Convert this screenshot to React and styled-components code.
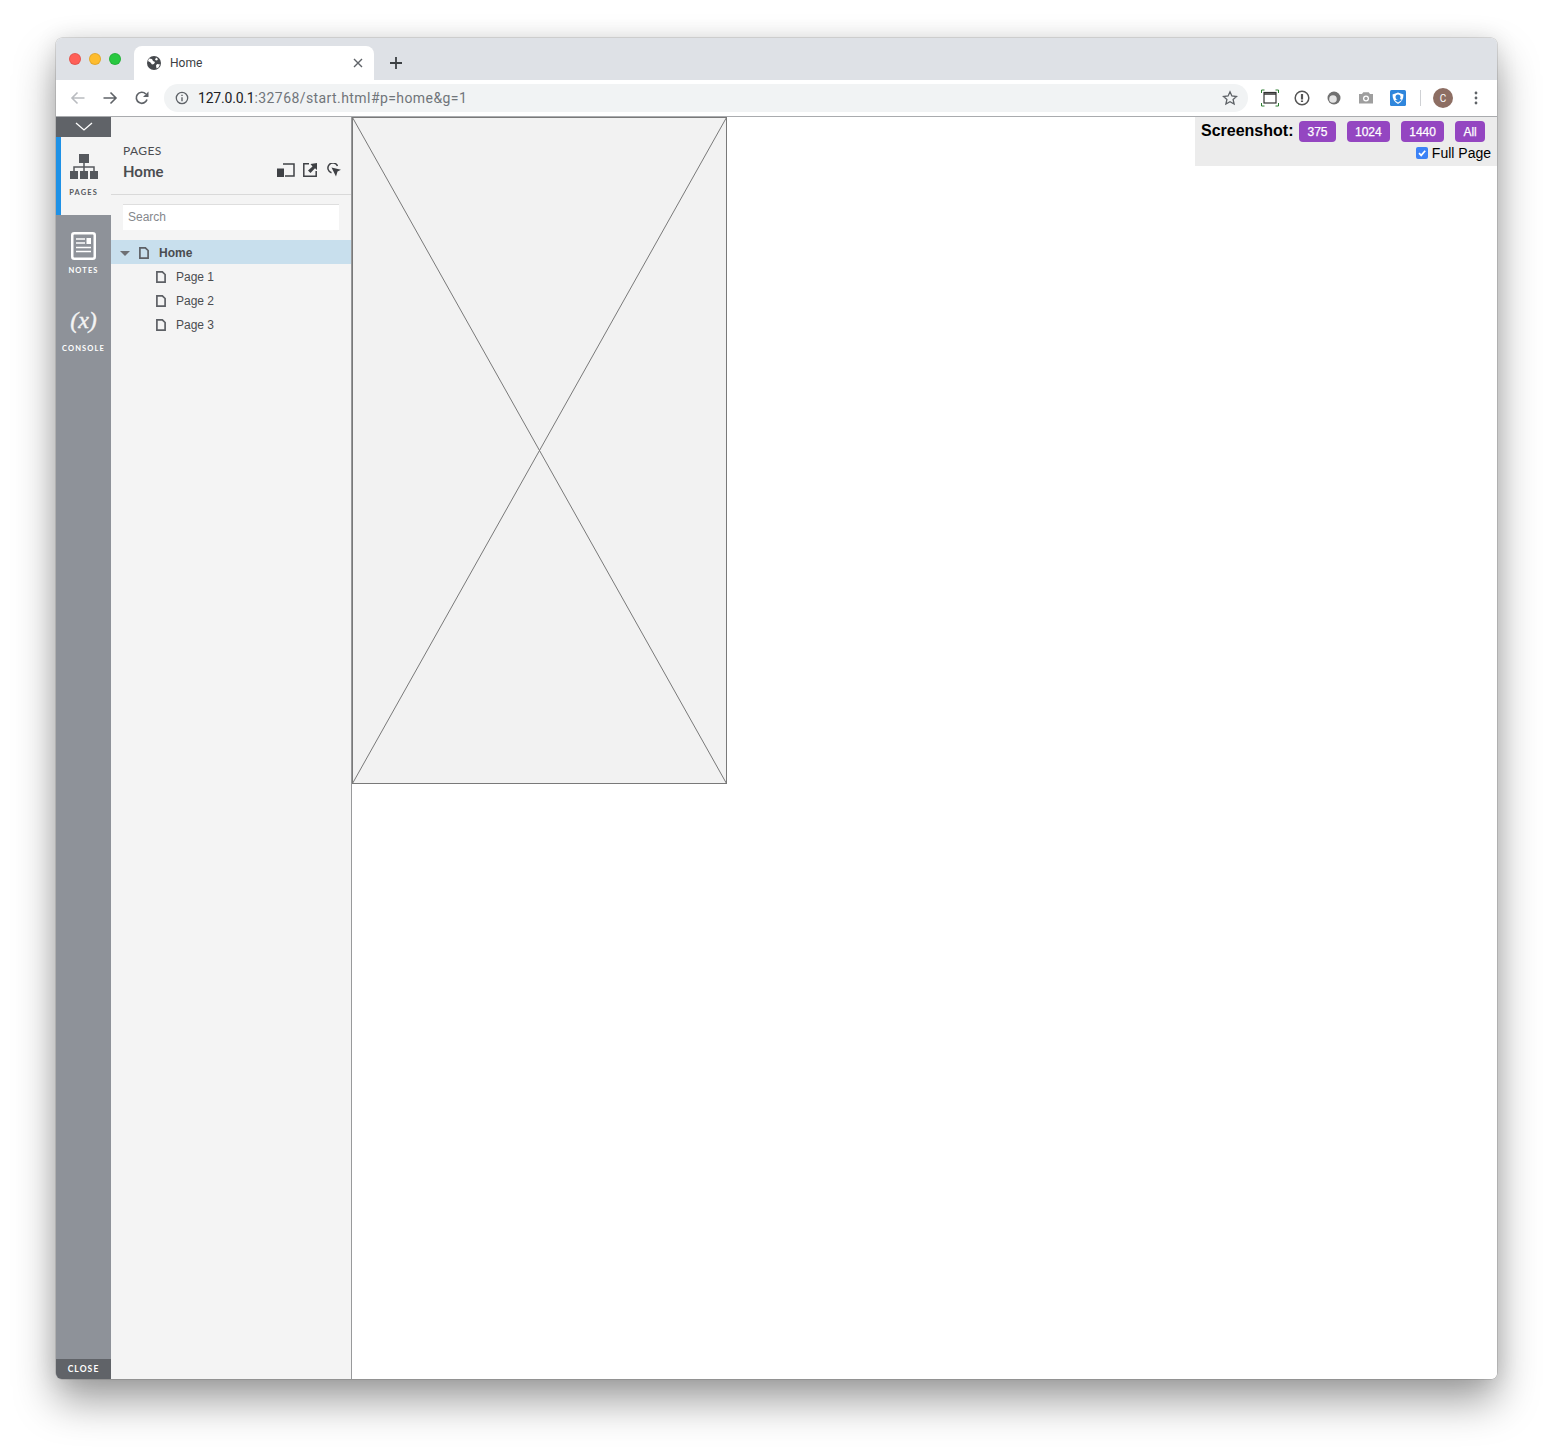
import React from 'react';
import styled, { createGlobalStyle } from 'styled-components';

const GlobalStyle = createGlobalStyle`
  html, body { margin: 0; padding: 0; background: #fff; }
  * { box-sizing: border-box; }
`;

const Page = styled.div`
  width: 1553px;
  height: 1453px;
  padding: 38px 56px 74px 56px;
  overflow: hidden;
  background: #fff;
`;

const Window = styled.div`
  position: relative;
  width: 1441px;
  height: 1341px;
  display: flex;
  flex-direction: column;
  border-radius: 6px;
  background: #fff;
  box-shadow: 0 0 0 0.5px rgba(0,0,0,.22), 0 22px 42px rgba(0,0,0,.38), 0 0 22px rgba(0,0,0,.1);
  overflow: hidden;
`;

const TabStrip = styled.div`
  height: 42px;
  flex: none;
  display: flex;
  align-items: flex-end;
  background: #dee1e6;
  padding-left: 13px;
`;

const Lights = styled.div`
  display: flex;
  gap: 8px;
  align-self: flex-start;
  margin-top: 15px;
  margin-right: 13px;
`;

const Light = styled.span`
  width: 12px;
  height: 12px;
  border-radius: 50%;
  background: ${p => p.$c};
  border: 0.5px solid rgba(0,0,0,.1);
`;

const Tab = styled.div`
  width: 240px;
  height: 34px;
  background: #fff;
  border-radius: 8px 8px 0 0;
  display: flex;
  align-items: center;
  padding: 0 10px 0 12px;
  font: 12px Roboto, "Liberation Sans", sans-serif;
  color: #3c4043;
`;

const TabTitle = styled.span`
  margin-left: 8px;
  flex: 1;
`;

const NewTab = styled.div`
  margin: 0 0 9px 14px;
  height: 16px;
  display: flex;
`;

const Toolbar = styled.div`
  height: 37px;
  flex: none;
  display: flex;
  align-items: center;
  background: #fff;
  border-bottom: 1px solid #a9abae;
  padding: 0 13px 0 14px;
`;

const NavIcons = styled.div`
  display: flex;
  gap: 16px;
  align-items: center;
`;

const Omnibox = styled.div`
  width: 1084px;
  height: 28px;
  margin-left: 14px;
  border-radius: 14px;
  background: #f1f3f4;
  display: flex;
  align-items: center;
  padding: 0 10px 0 11px;
  font: 14px Roboto, "Liberation Sans", sans-serif;
  letter-spacing: 0.42px;
  color: #70757a;
`;

const Host = styled.span`
  color: #202124;
  margin-left: 9px;
  letter-spacing: -0.2px;
`;

const Spacer = styled.span`
  flex: 1;
`;

const Extensions = styled.div`
  display: flex;
  align-items: center;
  margin-left: 13px;
`;

const ExtSlot = styled.span`
  display: flex;
  margin-left: ${p => p.$gap || 0}px;
`;

const Divider = styled.span`
  width: 1px;
  height: 16px;
  margin-left: 14px;
  background: #cfd1d4;
`;

const Avatar = styled.span`
  width: 20px;
  height: 20px;
  margin-left: 12px;
  border-radius: 50%;
  background: #8d6e63;
  color: #fff;
  font: 10px Roboto, sans-serif;
  display: flex;
  align-items: center;
  justify-content: center;
`;

const Body = styled.div`
  flex: 1;
  min-height: 0;
  display: flex;
`;

const Rail = styled.div`
  width: 55px;
  flex: none;
  display: flex;
  flex-direction: column;
  background: #8e9299;
`;

const Collapse = styled.div`
  height: 20px;
  background: #606368;
  display: flex;
  align-items: center;
  justify-content: center;
`;

const RailTab = styled.div`
  height: 78px;
  display: flex;
  flex-direction: column;
  align-items: center;
  padding-top: 16px;
  background: ${p => p.$active ? '#f4f4f4' : 'transparent'};
  box-shadow: ${p => p.$active ? 'inset 5px 0 0 #1e91e6' : 'none'};
  color: ${p => p.$active ? '#55585d' : '#fff'};
`;

const RailIcon = styled.div`
  height: 30px;
  display: flex;
  align-items: center;
  justify-content: center;
  padding-bottom: ${p => p.$raise || 0}px;
`;

const RailLabel = styled.div`
  font: 700 7.5px Lato, "Open Sans", sans-serif;
  letter-spacing: 1.1px;
  margin-top: 5px;
  line-height: 10px;
`;

const Formula = styled.div`
  font: italic 400 24px "Liberation Serif", serif;
  -webkit-text-stroke: 0.4px #f4f4f4;
  color: #f4f4f4;
  line-height: 30px;
  margin-top: -8px;
`;

const CloseBar = styled.div`
  margin-top: auto;
  height: 20px;
  background: #606368;
  color: #fff;
  font: 700 8.5px Lato, sans-serif;
  letter-spacing: 1.1px;
  display: flex;
  align-items: center;
  justify-content: center;
`;

const Panel = styled.div`
  width: 241px;
  flex: none;
  background: #f4f4f4;
  border-right: 1px solid #98999b;
`;

const PanelHead = styled.div`
  height: 78px;
  padding: 26px 10px 0 12px;
  border-bottom: 1px solid #d9d9d9;
  color: #4a4c50;
`;

const PanelLabel = styled.div`
  font: 12px/15px Lato, "Open Sans", sans-serif;
  letter-spacing: 0.4px;
`;

const PanelTitleRow = styled.div`
  display: flex;
  align-items: center;
  margin-top: 4px;
`;

const PanelTitle = styled.div`
  font: 700 15px/18px Lato, "Open Sans", sans-serif;
  flex: 1;
`;

const PanelTools = styled.div`
  display: flex;
  align-items: center;
  margin-top: -3px;
`;

const ToolSlot = styled.span`
  display: flex;
  margin-left: ${p => p.$gap || 0}px;
`;

const SearchWrap = styled.div`
  padding: 9px 12px 10px 12px;
`;

const Search = styled.div`
  height: 26px;
  background: #fff;
  border-top: 1px solid #dedede;
  color: #85888c;
  font: 12px/24px "Liberation Sans", sans-serif;
  padding-left: 5px;
`;

const TreeRow = styled.div`
  height: 24px;
  display: flex;
  align-items: center;
  padding: 2px 0 0 ${p => p.$selected ? '9px' : '45px'};
  background: ${p => p.$selected ? '#c8dfed' : 'transparent'};
  color: #4a4c50;
  font: ${p => p.$selected ? 700 : 400} 12px "Liberation Sans", sans-serif;
`;

const Caret = styled.span`
  width: 0;
  height: 0;
  margin-right: 9px;
  border-left: 5px solid transparent;
  border-right: 5px solid transparent;
  border-top: 5px solid #6e7074;
`;

const TreeText = styled.span`
  margin-left: 10px;
`;

const Canvas = styled.div`
  flex: 1;
  background: #fff;
  display: flex;
  align-items: flex-start;
`;

const Placeholder = styled.svg`
  display: block;
  width: 375px;
  height: 667px;
`;

const ShotBar = styled.div`
  position: absolute;
  top: 79px;
  right: 0;
  width: 302px;
  height: 49px;
  background: #ececec;
  font-family: "Liberation Sans", sans-serif;
  color: #000;
  padding: 4px 6px 0 6px;
`;

const ShotRow = styled.div`
  display: flex;
  align-items: center;
`;

const ShotTitle = styled.span`
  font-size: 16px;
  font-weight: 700;
  line-height: 18px;
  margin: -1px 6px 0 0;
`;

const ShotButton = styled.span`
  height: 21px;
  margin-right: 11.5px;
  padding: 0 8px;
  border-radius: 4px;
  background: #9446c1;
  color: #fff;
  font-size: 12px;
  -webkit-text-stroke: 0.25px #fff;
  display: flex;
  align-items: center;
`;

const FullPage = styled.div`
  display: flex;
  justify-content: flex-end;
  align-items: center;
  gap: 4px;
  font-size: 14px;
  line-height: 16px;
  margin-top: 3px;
`;

const Check = styled.span`
  width: 12px;
  height: 12px;
  border-radius: 2px;
  background: #3b82f6;
  display: flex;
`;

const Globe = () => (
  <svg width="16" height="16" viewBox="0 0 16 16">
    <circle cx="8" cy="8" r="7" fill="#45484c" />
    <path d="M3 3.500l3 .5 1 2 2 1-1 2-2 .5-1.500-2L2 6zM10 2.500l2 1.500-1 1.500-2-.5zM11 9l3 .5-1.500 3-2 1-.5-3z" fill="#fff" />
  </svg>
);

const X = () => (
  <svg width="12" height="12" viewBox="0 0 12 12">
    <path d="M2 2l8 8M10 2l-8 8" stroke="#5f6368" strokeWidth="1.400" />
  </svg>
);

const Plus = () => (
  <svg width="16" height="16" viewBox="0 0 16 16">
    <path d="M8 2v12M2 8h12" stroke="#3c4043" strokeWidth="1.800" />
  </svg>
);

const Arrow = ({ color, flip }) => (
  <svg width="16" height="16" viewBox="0 0 16 16" style={flip ? { transform: 'scaleX(-1)' } : undefined}>
    <path d="M1.500 8h12.500M8.500 2.500L14 8l-5.500 5.500" fill="none" stroke={color} strokeWidth="1.600" />
  </svg>
);

const Reload = () => (
  <svg width="16" height="16" viewBox="0 0 16 16">
    <path d="M13 9.500A5.500 5.500 0 1 1 11.800 4" fill="none" stroke="#5f6368" strokeWidth="1.700" />
    <path d="M14.500 1.500v5.500H9z" fill="#5f6368" />
  </svg>
);

const Info = () => (
  <svg width="14" height="14" viewBox="0 0 14 14">
    <circle cx="7" cy="7" r="5.700" fill="none" stroke="#5f6368" strokeWidth="1.300" />
    <path d="M7 6.200v4M7 3.800v1.300" stroke="#5f6368" strokeWidth="1.400" />
  </svg>
);

const Star = () => (
  <svg width="16" height="16" viewBox="0 0 16 16">
    <path d="M8 1.800l1.900 4.200 4.600.5-3.400 3 1 4.500L8 11.700 3.900 14l1-4.500-3.400-3 4.600-.5z" fill="none" stroke="#5f6368" strokeWidth="1.300" />
  </svg>
);

const ExtCapture = () => (
  <svg width="18" height="18" viewBox="0 0 18 18">
    <path d="M.5 4V1h3M14.500 1h3v3M.5 14v3h3M14.500 17h3v-3" fill="none" stroke="#2e7d32" strokeWidth="1" />
    <rect x="3" y="3.500" width="12" height="10.500" fill="none" stroke="#333" strokeWidth="1.200" />
    <path d="M3 5h12" stroke="#333" strokeWidth="1.500" />
  </svg>
);

const ExtOne = () => (
  <svg width="18" height="18" viewBox="0 0 18 18">
    <circle cx="9" cy="9" r="6.800" fill="none" stroke="#555" strokeWidth="1.500" />
    <path d="M9 5v5.500M9 11.500v1.500" stroke="#555" strokeWidth="2.200" />
  </svg>
);

const ExtOrb = () => (
  <svg width="18" height="18" viewBox="0 0 18 18">
    <circle cx="9" cy="9" r="6.500" fill="#707070" />
    <circle cx="8" cy="10" r="3.800" fill="#e4e4e4" />
  </svg>
);

const ExtCamera = () => (
  <svg width="18" height="18" viewBox="0 0 18 18">
    <path d="M2 5h3l1.300-1.800h5.400L13 5h3v9.500H2z" fill="#9e9e9e" />
    <circle cx="9" cy="9.500" r="3" fill="#fff" />
    <circle cx="9" cy="9.500" r="1.700" fill="#9e9e9e" />
  </svg>
);

const ExtShield = () => (
  <svg width="16" height="16" viewBox="0 0 16 16">
    <rect width="16" height="16" rx="1.500" fill="#2f86dc" />
    <path d="M2.500 4.500L8 2.500l5.500 2c0 4.500-1.800 7.500-5.500 9.500-3.700-2-5.500-5-5.500-9.500z" fill="#fff" />
    <circle cx="8" cy="7" r="2.500" fill="#2f86dc" />
    <path d="M5 10.500l4-2 3 1.500-4 2.500z" fill="#2f86dc" />
  </svg>
);

const Kebab = () => (
  <svg width="4" height="14" viewBox="0 0 4 14">
    <circle cx="2" cy="2" r="1.400" fill="#5f6368" />
    <circle cx="2" cy="7" r="1.400" fill="#5f6368" />
    <circle cx="2" cy="12" r="1.400" fill="#5f6368" />
  </svg>
);

const Chevron = () => (
  <svg width="18" height="10" viewBox="0 0 18 10">
    <path d="M1 1l8 7 8-7" fill="none" stroke="#fff" strokeWidth="1.300" />
  </svg>
);

const Sitemap = () => (
  <svg width="28" height="25" viewBox="0 0 28 25">
    <g fill="#55585d">
      <rect x="9" y="0" width="10" height="9" />
      <rect x="0" y="17" width="8" height="8" />
      <rect x="10" y="17" width="8" height="8" />
      <rect x="20" y="17" width="8" height="8" />
    </g>
    <path d="M14 9v8M4 17v-4h20v4" fill="none" stroke="#55585d" strokeWidth="1.500" />
  </svg>
);

const Notes = () => (
  <svg width="25" height="28" viewBox="0 0 25 28">
    <rect x="1.250" y="1.250" width="22.500" height="25.500" rx="2" fill="none" stroke="#fff" strokeWidth="2.500" />
    <path d="M5 7h9M5 11h9M5 15.500h15M5 19.500h15" stroke="#fff" strokeWidth="1.600" />
    <rect x="15.500" y="6" width="4.500" height="6" fill="#fff" />
  </svg>
);

const SizeIcon = () => (
  <svg width="18" height="14" viewBox="0 0 18 14">
    <path d="M6 1h11v12H8" fill="none" stroke="#3f4145" strokeWidth="1.500" />
    <rect x="0" y="5.500" width="7" height="8.500" fill="#3f4145" />
  </svg>
);

const OpenIcon = () => (
  <svg width="14" height="14" viewBox="0 0 14 14">
    <path d="M6 .8H.8v12.400h12.400V8" fill="none" stroke="#3f4145" strokeWidth="1.500" />
    <path d="M14 0v7l-2-1.700-4.500 4.700-2.500-2.500L9.500 3.500 7.500 1z" fill="#3f4145" />
  </svg>
);

const PointerIcon = () => (
  <svg width="14" height="14" viewBox="0 0 14 14">
    <path d="M10.500 3A5 5 0 1 0 4.500 9.800" fill="none" stroke="#3f4145" strokeWidth="1.500" />
    <path d="M4.500 4.500L14 6.800l-3.500 1.800-1.500 5z" fill="#3f4145" />
  </svg>
);

const PageDoc = () => (
  <svg width="10" height="12" viewBox="0 0 10 12">
    <path d="M.9 .8h5.400L9.100 3.500v7.700H.9z" fill="none" stroke="#5d6065" strokeWidth="1.700" />
  </svg>
);

const Checkmark = () => (
  <svg width="12" height="12" viewBox="0 0 12 12">
    <path d="M3 6.200l2.200 2.200L9.200 3.800" fill="none" stroke="#fff" strokeWidth="1.700" />
  </svg>
);

const subPages = ['Page 1', 'Page 2', 'Page 3'];
const shots = ['375', '1024', '1440', 'All'];

export default function App() {
  return (
    <Page>
      <GlobalStyle />
      <Window>
        <TabStrip>
          <Lights>
            <Light $c="#ff5f57" />
            <Light $c="#febc2e" />
            <Light $c="#28c840" />
          </Lights>
          <Tab>
            <Globe />
            <TabTitle>Home</TabTitle>
            <X />
          </Tab>
          <NewTab><Plus /></NewTab>
        </TabStrip>
        <Toolbar>
          <NavIcons>
            <Arrow color="#b9bcc0" flip />
            <Arrow color="#5f6368" />
            <Reload />
          </NavIcons>
          <Omnibox>
            <Info />
            <Host>127.0.0.1</Host>:32768/start.html#p=home&amp;g=1
            <Spacer />
            <Star />
          </Omnibox>
          <Extensions>
            <ExtSlot><ExtCapture /></ExtSlot>
            <ExtSlot $gap={14}><ExtOne /></ExtSlot>
            <ExtSlot $gap={14}><ExtOrb /></ExtSlot>
            <ExtSlot $gap={14}><ExtCamera /></ExtSlot>
            <ExtSlot $gap={15}><ExtShield /></ExtSlot>
            <Divider />
            <Avatar>C</Avatar>
            <ExtSlot $gap={21}><Kebab /></ExtSlot>
          </Extensions>
        </Toolbar>
        <Body>
          <Rail>
            <Collapse><Chevron /></Collapse>
            <RailTab $active>
              <RailIcon $raise={3}><Sitemap /></RailIcon>
              <RailLabel>PAGES</RailLabel>
            </RailTab>
            <RailTab>
              <RailIcon><Notes /></RailIcon>
              <RailLabel>NOTES</RailLabel>
            </RailTab>
            <RailTab>
              <RailIcon><Formula>(x)</Formula></RailIcon>
              <RailLabel>CONSOLE</RailLabel>
            </RailTab>
            <CloseBar>CLOSE</CloseBar>
          </Rail>
          <Panel>
            <PanelHead>
              <PanelLabel>PAGES</PanelLabel>
              <PanelTitleRow>
                <PanelTitle>Home</PanelTitle>
                <PanelTools>
                  <ToolSlot><SizeIcon /></ToolSlot>
                  <ToolSlot $gap={8}><OpenIcon /></ToolSlot>
                  <ToolSlot $gap={10}><PointerIcon /></ToolSlot>
                </PanelTools>
              </PanelTitleRow>
            </PanelHead>
            <SearchWrap>
              <Search>Search</Search>
            </SearchWrap>
            <TreeRow $selected>
              <Caret />
              <PageDoc />
              <TreeText>Home</TreeText>
            </TreeRow>
            {subPages.map(name => (
              <TreeRow key={name}>
                <PageDoc />
                <TreeText>{name}</TreeText>
              </TreeRow>
            ))}
          </Panel>
          <Canvas>
            <Placeholder viewBox="0 0 375 667">
              <rect x="0.5" y="0.5" width="374" height="666" fill="#f2f2f2" stroke="#797979" />
              <path d="M0.500 0.500L374.500 666.500M374.500 0.500L0.500 666.500" stroke="#797979" fill="none" />
            </Placeholder>
          </Canvas>
        </Body>
        <ShotBar>
          <ShotRow>
            <ShotTitle>Screenshot:</ShotTitle>
            {shots.map(label => (
              <ShotButton key={label}>{label}</ShotButton>
            ))}
          </ShotRow>
          <FullPage>
            <Check><Checkmark /></Check>
            Full Page
          </FullPage>
        </ShotBar>
      </Window>
    </Page>
  );
}
